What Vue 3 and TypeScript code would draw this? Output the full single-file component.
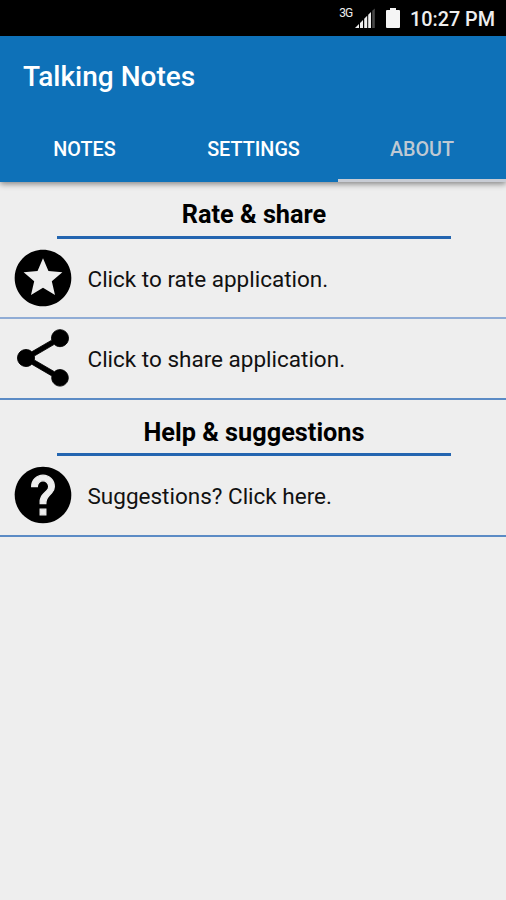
<script setup lang="ts">
import { ref } from 'vue'

interface Item {
  icon: string
  label: string
}
interface Section {
  title: string
  items: Item[]
}

const tabs: string[] = ['Notes', 'Settings', 'About']
const activeTab = ref<string>('About')

const icons: Record<string, string> = {
  rate: 'M12 2C6.47 2 2 6.48 2 12s4.47 10 9.99 10C17.52 22 22 17.52 22 12S17.52 2 11.99 2zm4.24 16L12 15.45 7.77 18l1.12-4.81-3.73-3.23 4.92-.42L12 5l1.92 4.53 4.92.42-3.73 3.23L16.23 18z',
  share: 'M18 16.08c-.76 0-1.44.3-1.96.77L8.91 12.7c.05-.23.09-.46.09-.7s-.04-.47-.09-.7l7.05-4.11c.54.5 1.25.81 2.04.81 1.66 0 3-1.34 3-3s-1.34-3-3-3-3 1.34-3 3c0 .24.04.47.09.7L8.04 9.81C7.5 9.31 6.79 9 6 9c-1.66 0-3 1.34-3 3s1.34 3 3 3c.79 0 1.5-.31 2.04-.81l7.12 4.16c-.05.21-.08.43-.08.65 0 1.61 1.31 2.92 2.92 2.92s2.92-1.31 2.92-2.92-1.31-2.92-2.92-2.92z',
  help: 'M12 2C6.48 2 2 6.48 2 12s4.48 10 10 10 10-4.48 10-10S17.52 2 12 2z',
}
const questionMark =
  'M13 19h-2v-2h2v2zm2.07-7.75l-.9.92C13.45 12.9 13 13.5 13 15h-2v-.5c0-1.1.45-2.1 1.17-2.83l1.24-1.26c.37-.36.59-.86.59-1.41 0-1.1-.9-2-2-2s-2 .9-2 2H8c0-2.21 1.79-4 4-4s4 1.79 4 4c0 .88-.36 1.68-.93 2.25z'

const sections: Section[] = [
  {
    title: 'Rate & share',
    items: [
      { icon: 'rate', label: 'Click to rate application.' },
      { icon: 'share', label: 'Click to share application.' },
    ],
  },
  {
    title: 'Help & suggestions',
    items: [{ icon: 'help', label: 'Suggestions? Click here.' }],
  },
]
</script>

<template>
  <div class="screen">
    <div class="status">
      <span class="network">3G</span>
      <svg class="signal" viewBox="0 0 20 20" width="20" height="20">
        <path d="M0 20L4 16V20zM5 15L8 12V20H5zM9.2 10.8L12.2 7.8V20H9.2zM13.2 6.8L16 4V20H13.2z" fill="#eee" />
        <path d="M17.2 2.8L19.8 .5V20H17.2z" fill="#484848" />
      </svg>
      <svg class="battery" viewBox="0 0 14 20" width="14" height="20">
        <path d="M4 0H10V2H13Q14 2 14 3V19Q14 20 13 20H1Q0 20 0 19V3Q0 2 1 2H4z" fill="#f5f5f5" />
      </svg>
      <span class="clock">10:27 PM</span>
    </div>
    <header class="bar">
      <h1 class="title"><span>Talking Notes</span></h1>
      <nav class="tabs">
        <button
          v-for="tab in tabs"
          :key="tab"
          class="tab"
          :class="{ active: tab === activeTab }"
          @click="activeTab = tab"
        ><span>{{ tab }}</span></button>
      </nav>
    </header>
    <main class="content">
      <section v-for="section in sections" :key="section.title" class="section">
        <h2 class="heading"><span>{{ section.title }}</span></h2>
        <div v-for="item in section.items" :key="item.label" class="row">
          <svg class="icon" viewBox="0 0 24 24" width="68" height="68">
            <path :class="item.icon" :d="icons[item.icon]" />
            <path v-if="item.icon === 'help'" class="mark" :d="questionMark" />
          </svg>
          <span class="label">{{ item.label }}</span>
        </div>
      </section>
    </main>
  </div>
</template>

<style>
body {
  margin: 0;
  background: #eee;
}
</style>

<style scoped>
.screen {
  width: 506px;
  height: 900px;
  overflow: hidden;
  background: #eee;
  color: #111;
  font-family: Roboto, sans-serif;
}
.status {
  display: flex;
  height: 36px;
  box-sizing: border-box;
  padding: 8px 11px 0 0;
  justify-content: flex-end;
  align-items: flex-start;
  background: #000;
  color: #eee;
}
.network {
  font-size: 12px;
  line-height: 11px;
  letter-spacing: -0.8px;
  margin-right: 3px;
}
.battery {
  margin-left: 11px;
}
.clock {
  margin-left: 9.5px;
  font-size: 19.8px;
  line-height: 23px;
  font-weight: 500;
}
.bar {
  position: relative;
  height: 145.5px;
  background: #0e71b8;
  color: #fff;
  box-shadow: 0 2px 6px rgba(0, 0, 0, 0.45);
}
.title {
  margin: 0;
  padding-left: 23px;
  height: 81px;
  line-height: 82px;
  font-size: 28px;
  font-weight: 500;
}
.tabs {
  display: grid;
  grid-template-columns: 169px 169px 168px;
  height: 64.5px;
}
.tab {
  border: 0;
  border-bottom: 3.5px solid transparent;
  padding: 5px 0 0;
  background: none;
  color: #fff;
  font: 500 19.8px/24px Roboto, sans-serif;
  text-transform: uppercase;
}
.tab.active {
  color: #bfc9d3;
  border-bottom-color: #c8ccd4;
}
.heading {
  box-sizing: border-box;
  width: 394px;
  height: 57px;
  margin: 0 0 0 57px;
  padding-top: 18px;
  border-bottom: 3px solid #2365b0;
  color: #000;
  font-size: 25.3px;
  line-height: 30px;
  font-weight: 700;
  text-align: center;
}
.section + .section .heading {
  height: 56px;
}
.row {
  display: flex;
  box-sizing: border-box;
  height: 81px;
  padding-left: 8.5px;
  align-items: center;
  border-bottom: 2px solid #5b8bc5;
}
.section:first-child .row:nth-child(2) {
  height: 80px;
  border-color: #90acd5;
}
.share {
  stroke: #000;
  stroke-width: 0.3;
}
.mark {
  fill: #eee;
  stroke: #eee;
  stroke-width: 0.45;
}
.label {
  margin-left: 11px;
  padding-top: 2px;
  font-size: 22.5px;
  line-height: 28px;
}
</style>
